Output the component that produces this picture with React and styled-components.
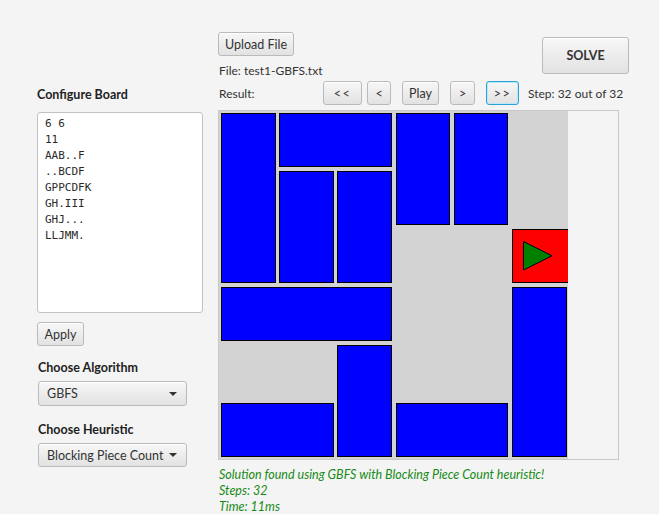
import React from "react";
import styled, { createGlobalStyle, css } from "styled-components";

const GlobalStyle = createGlobalStyle`
  html, body { margin: 0; padding: 0; background: #f4f4f4; }
  body { font-family: "Open Sans", "Noto Sans", sans-serif; color: #333; }
  * { box-sizing: border-box; }
`;

const UI_FONT = `"Lato", "Open Sans", sans-serif`;

const Page = styled.div`
  display: flex;
  width: 659px;
  height: 514px;
  background: #f4f4f4;
  font-family: ${UI_FONT};
  font-size: 12px;
  color: #333;
  overflow: hidden;
`;

const LeftPanel = styled.div`
  width: 218px;
  padding: 87px 0 0 37px;
  display: flex;
  flex-direction: column;
  align-items: flex-start;
`;

const SectionLabel = styled.div`
  font-weight: 700;
  font-size: 12.5px;
  line-height: 16px;
  color: #222;
  margin-top: ${(p) => p.$mt || 0}px;
  padding-left: ${(p) => p.$pl || 0}px;
`;

const ConfigText = styled.div`
  margin-top: 9px;
  width: 166px;
  height: 201px;
  background: #fff;
  border: 1px solid #c2c2c2;
  border-radius: 3px;
  padding: 3px 7px;
  font-family: "DejaVu Sans Mono", "Liberation Mono", monospace;
  font-size: 11px;
  line-height: 16px;
  color: #2a2a2a;
  white-space: pre;
`;

const buttonBase = css`
  font-family: ${UI_FONT};
  font-size: 12.5px;
  color: #333;
  background: linear-gradient(#f7f7f7, #e2e2e2);
  border: 1px solid #bababa;
  border-radius: 3px;
  box-shadow: inset 0 1px 0 #fff;
  display: flex;
  align-items: center;
  justify-content: center;
  padding: 0;
  cursor: pointer;
`;

const Button = styled.button`
  ${buttonBase};
  width: ${(p) => p.$w}px;
  height: ${(p) => p.$h || 24}px;
  margin-top: ${(p) => p.$mt || 0}px;
  margin-left: ${(p) => p.$ml || 0}px;
  font-weight: ${(p) => (p.$bold ? 700 : 400)};
  letter-spacing: ${(p) => p.$ls || 0}px;
  ${(p) =>
    p.$focused &&
    css`
      border: 1px solid #2aa3d9;
      box-shadow: inset 0 0 0 1px #bfe6f5;
    `}
`;

const Combo = styled.div`
  ${buttonBase};
  justify-content: space-between;
  width: 149px;
  height: ${(p) => p.$h || 24}px;
  margin-top: 5px;
  margin-left: 1px;
  padding: 0 9px 0 8px;
`;

const Arrow = styled.span`
  width: 0;
  height: 0;
  border-left: 4px solid transparent;
  border-right: 4px solid transparent;
  border-top: 4px solid #333;
`;

const RightPanel = styled.div`
  width: 411px;
  padding-top: 32px;
  display: flex;
  flex-direction: column;
`;

const TopRow = styled.div`
  display: flex;
  justify-content: space-between;
  align-items: flex-start;
`;

const UploadGroup = styled.div`
  display: flex;
  flex-direction: column;
  align-items: flex-start;
`;

const FileLabel = styled.div`
  margin-top: 7px;
  padding-left: 1px;
  line-height: 16px;
`;

const ResultRow = styled.div`
  margin-top: 2px;
  display: flex;
  align-items: center;
  height: 24px;
`;

const ResultLabel = styled.div`
  width: 105px;
  padding-left: 1px;
`;

const StepText = styled.div`
  margin-left: 9px;
`;

const Pane = styled.div`
  margin-top: 5px;
  width: 401px;
  height: 350px;
  border: 1px solid #c8c8c8;
  background: #f4f4f4;
`;

const Board = styled.div`
  width: 349px;
  height: 348px;
  background: #d3d3d3;
  display: grid;
  grid-template-columns: repeat(6, 1fr);
  grid-template-rows: repeat(6, 58px);
  overflow: hidden;
`;

const Piece = styled.div`
  grid-column: ${(p) => p.$c + 1} / span ${(p) => p.$w};
  grid-row: ${(p) => p.$r + 1} / span ${(p) => p.$h};
  margin: 2px ${(p) => (p.$primary ? -4 : 1.5)}px 2px 2px;
  background: ${(p) => (p.$primary ? "#ff0000" : "#0000ff")};
  border: 1.5px solid #000;
  display: flex;
  align-items: center;
  padding-left: 10.5px;
`;

const Status = styled.div`
  margin-top: 7px;
  padding-left: 1px;
  color: #168a16;
  font-style: italic;
  font-size: 12.5px;
  line-height: 16px;
`;

const pieces = [
  { c: 0, r: 0, w: 1, h: 3 },
  { c: 1, r: 0, w: 2, h: 1 },
  { c: 1, r: 1, w: 1, h: 2 },
  { c: 2, r: 1, w: 1, h: 2 },
  { c: 3, r: 0, w: 1, h: 2 },
  { c: 4, r: 0, w: 1, h: 2 },
  { c: 5, r: 2, w: 1, h: 1, primary: true },
  { c: 0, r: 3, w: 3, h: 1 },
  { c: 5, r: 3, w: 1, h: 3 },
  { c: 2, r: 4, w: 1, h: 2 },
  { c: 0, r: 5, w: 2, h: 1 },
  { c: 3, r: 5, w: 2, h: 1 },
];

const config = `6 6
11
AAB..F
..BCDF
GPPCDFK
GH.III
GHJ...
LLJMM.`;

export default function App() {
  return (
    <>
      <GlobalStyle />
      <Page>
        <LeftPanel>
          <SectionLabel>Configure Board</SectionLabel>
          <ConfigText>{config}</ConfigText>
          <Button $w={47} $mt={9}>Apply</Button>
          <SectionLabel $mt={14} $pl={1}>Choose Algorithm</SectionLabel>
          <Combo $h={25}>
            <span>GBFS</span>
            <Arrow />
          </Combo>
          <SectionLabel $mt={16} $pl={1}>Choose Heuristic</SectionLabel>
          <Combo>
            <span>Blocking Piece Count</span>
            <Arrow />
          </Combo>
        </LeftPanel>
        <RightPanel>
          <TopRow>
            <UploadGroup>
              <Button $w={76}>Upload File</Button>
              <FileLabel>File: test1-GBFS.txt</FileLabel>
            </UploadGroup>
            <Button $w={87} $h={37} $mt={5} $bold>SOLVE</Button>
          </TopRow>
          <ResultRow>
            <ResultLabel>Result:</ResultLabel>
            <Button $w={39} $ls={1.5}>&lt;&lt;</Button>
            <Button $w={24} $ml={5}>&lt;</Button>
            <Button $w={37} $ml={11}>Play</Button>
            <Button $w={25} $ml={11}>&gt;</Button>
            <Button $w={33} $ml={11} $ls={1.5} $focused>&gt;&gt;</Button>
            <StepText>Step: 32 out of 32</StepText>
          </ResultRow>
          <Pane>
            <Board>
              {pieces.map((p, i) => (
                <Piece key={i} $c={p.c} $r={p.r} $w={p.w} $h={p.h} $primary={p.primary}>
                  {p.primary && (
                    <svg width="30" height="30" viewBox="0 0 30 30">
                      <polygon points="0.5,0.5 0.5,29 29,14.75" fill="#008000" stroke="#000" strokeWidth="1" />
                    </svg>
                  )}
                </Piece>
              ))}
            </Board>
          </Pane>
          <Status>
            Solution found using GBFS with Blocking Piece Count heuristic!
            <br />
            Steps: 32
            <br />
            Time: 11ms
          </Status>
        </RightPanel>
      </Page>
    </>
  );
}
